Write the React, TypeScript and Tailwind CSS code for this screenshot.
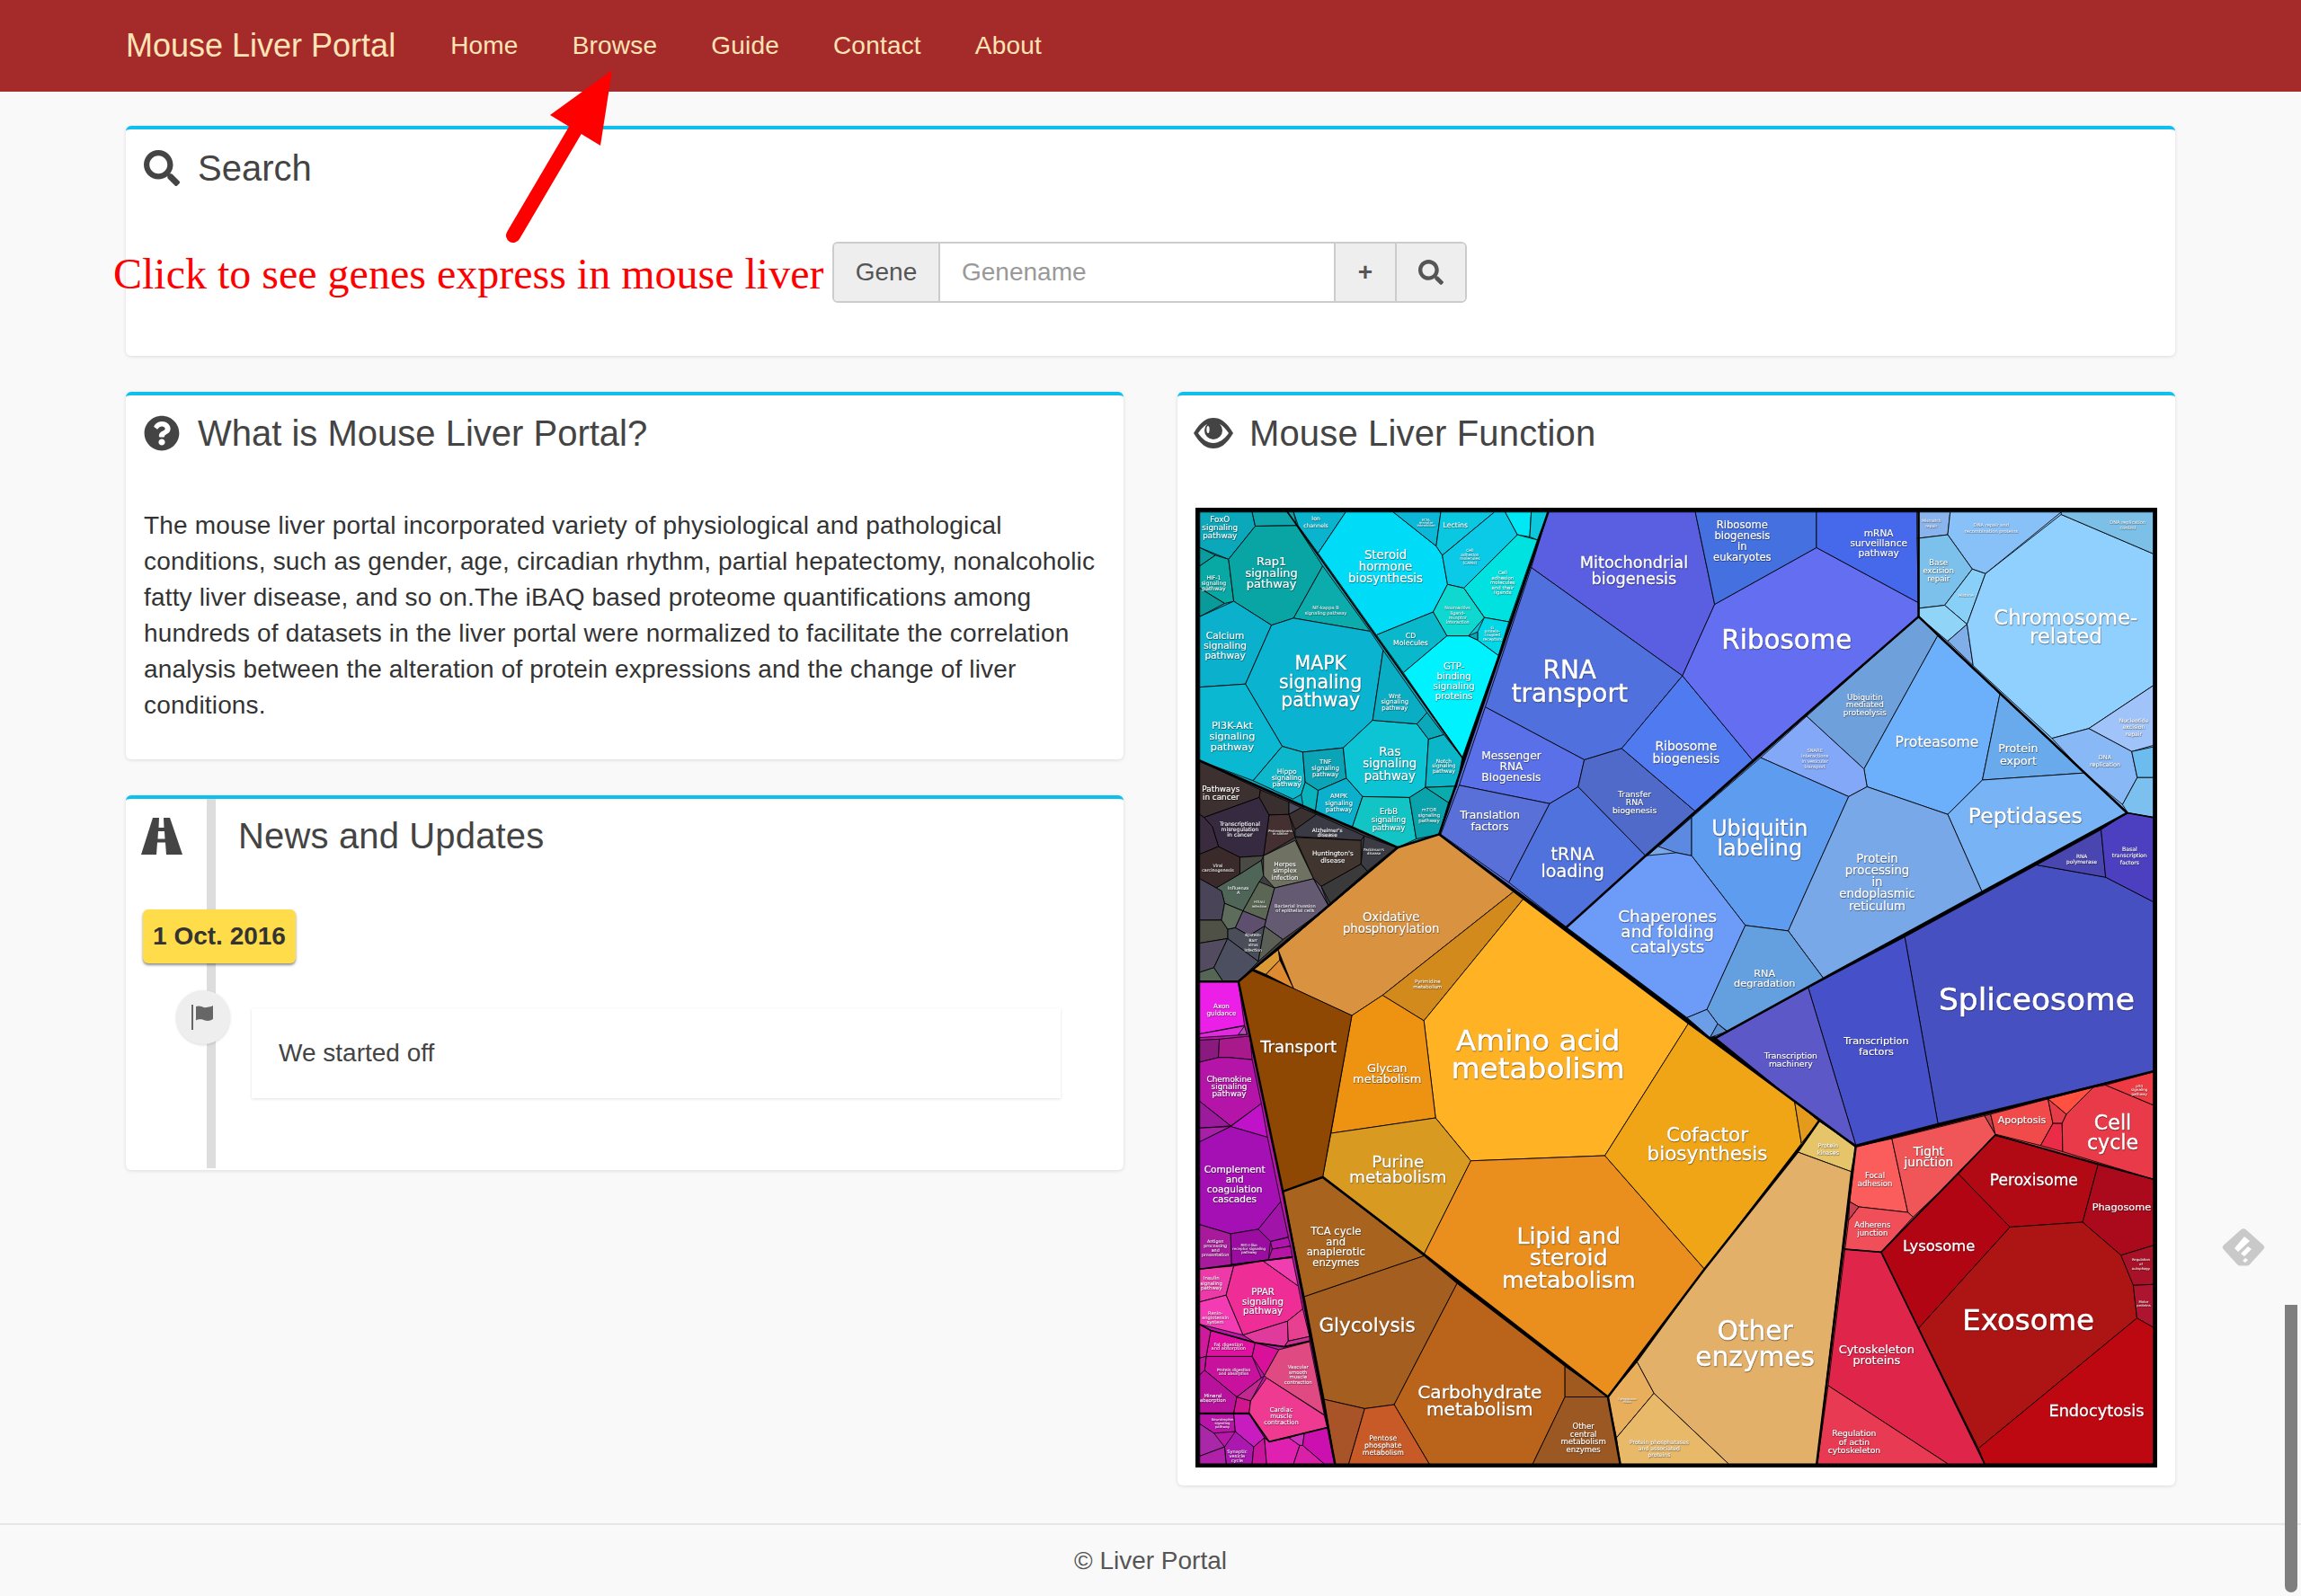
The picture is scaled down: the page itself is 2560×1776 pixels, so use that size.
import { FaQuestionCircle, FaSearch } from 'react-icons/fa';

type Cell = [string, string];
type Label = [number, number, number, number, string];

// Treemap polygons, in units of the 3136 wide viewBox. q1 also holds cells that span quadrants.
const backing: Cell[] = [
  ['#0aa9bf', '14,14 300,14 870,815 795,1065 660,1108 14,825'],
  ['#0ac5dc', '300,14 1150,14 870,815'],
  ['#3f3d40', '14,825 660,1108 140,1545 14,1545'],
  ['#b818a8', '14,1545 140,1545 285,2230 455,3118 14,3118'],
  ['#5870d8', '1150,14 2358,14 2358,355 1210,1368 795,1065'],
  ['#88c0f8', '2358,14 3123,14 3123,1010 3038,995 2358,355'],
  ['#78a8e8', '2358,355 3038,995 2048,1535 1698,1728 1210,1368'],
  ['#e8414c', '2153,2083 3123,1838 3123,3118 2026,3118'],
];

const q1: Cell[] = [
  ['#0aa8ba', '14,14 185,14 195,60 108,168 14,130'],
  ['#0ea5ad', '185,14 320,14 330,58 195,60'],
  ['#0a9c9e', '14,130 65,155 14,190'],
  ['#08a8a5', '14,190 65,155 108,168 125,305 95,312 14,262'],
  ['#0a9a9a', '14,262 95,312 14,355'],
  ['#09a5a5', '108,168 195,60 330,58 415,190 320,360 248,383 125,305'],
  ['#0cacac', '415,190 570,403 320,360'],
  ['#0ab0cc', '14,355 125,305 248,383 163,575 14,585'],
  ['#0ab3cf', '248,383 320,360 570,403 612,465 578,693 482,783 350,797 283,778 163,575'],
  ['#0ab8d2', '14,585 163,575 283,778 188,890 14,825'],
  ['#0db8cc', '283,778 350,797 358,895 345,935 318,950 188,890'],
  ['#0aa4b6', '350,797 482,783 492,882 400,922 358,895'],
  ['#0cc4d4', '482,783 578,693 722,705 760,755 750,912 698,945 545,942 492,882'],
  ['#0aa8b8', '722,705 755,668 810,740 760,755'],
  ['#0aaec4', '612,465 755,668 722,705 578,693'],
  ['#0ab6c8', '760,755 810,740 870,815 852,908 750,912'],
  ['#0aabab', '750,912 852,908 825,962'],
  ['#0ab0cc', '400,922 492,882 545,942 512,1040 390,995'],
  ['#0ab4bc', '345,935 358,895 400,922 390,995 352,980'],
  ['#12c4c4', '545,942 698,945 720,1080 660,1108 512,1040'],
  ['#0aa3ac', '698,945 750,912 825,962 795,1065 720,1080'],
  ['#0bb4ce', '320,14 490,14 400,148 335,58'],
  ['#00dcf8', '490,14 645,14 785,125 805,155 822,250 775,340 590,415 400,148'],
  ['#0bb8d8', '645,14 800,14 785,125'],
  ['#0ac8e0', '800,14 975,14 805,155 785,125'],
  ['#0acae8', '975,14 1010,14 1050,88 875,262 822,250 805,155'],
  ['#00e8f5', '1010,14 1095,14 1090,95 1050,88'],
  ['#0cc8dc', '1095,14 1150,14 1115,105 1090,95'],
  ['#00e2e0', '1050,88 1115,105 1022,372 942,358 875,262'],
  ['#0fd8d0', '822,250 875,262 942,358 890,418 820,418 775,340'],
  ['#0ab8cc', '775,340 820,418 678,538 590,415'],
  ['#00d8e8', '942,358 1022,372 988,482 920,432 920,405'],
  ['#0aa8b8', '890,418 920,405 920,432'],
  ['#00f2ff', '820,418 890,418 920,432 988,482 870,815 678,538'],
  // dark group
  ['#3d3030', '14,825 212,920 208,945 28,1010 14,1000'],
  ['#3a2f2f', '212,920 305,960 305,1000 240,1002 208,945'],
  ['#4a4a5a', '305,960 345,978 305,1000'],
  ['#443030', '240,1002 305,1000 325,1075 222,1135'],
  ['#3a3030', '345,978 395,1000 325,1050 305,1000'],
  ['#352a40', '28,1010 208,945 240,1002 222,1135 145,1140 75,1105 55,1040'],
  ['#3a2c3e', '14,1000 28,1010 55,1040 75,1105 14,1130'],
  ['#3a2a2a', '14,1130 75,1105 145,1140 145,1195 68,1240 14,1210'],
  ['#4a4a45', '145,1140 222,1135 215,1150 145,1195'],
  ['#3a3a44', '395,1000 550,1070 540,1085 325,1072 325,1050'],
  ['#40352f', '325,1075 540,1085 540,1162 410,1235 385,1210'],
  ['#3b3b44', '550,1070 655,1108 560,1185 540,1162'],
  ['#3a3a3a', '410,1235 540,1162 560,1185 440,1290'],
  ['#6f7163', '325,1085 385,1210 258,1240 222,1200 222,1135'],
  ['#4f6558', '145,1195 215,1150 222,1200 208,1220 155,1315 95,1290 85,1250 68,1240'],
  ['#5b6654', '208,1220 258,1240 230,1345 155,1315'],
  ['#645a72', '258,1240 385,1210 435,1300 285,1408 225,1365 230,1345'],
  ['#5e5870', '385,1210 410,1235 435,1300'],
  ['#4a4458', '14,1210 68,1240 85,1250 95,1290 85,1345 14,1345'],
  ['#5e6d5b', '95,1290 155,1315 130,1370 105,1375 85,1345'],
  ['#5e4f6e', '155,1315 230,1345 225,1365 175,1395 130,1370'],
  ['#4a4e58', '130,1370 175,1395 225,1365 205,1480 105,1405 105,1375'],
  ['#5c5f56', '225,1365 285,1408 205,1480'],
  ['#4f5046', '14,1345 85,1345 105,1375 105,1405 14,1420'],
  ['#534c60', '14,1420 105,1405 60,1500 14,1515'],
  ['#4b4f60', '105,1405 205,1480 140,1545 90,1545 60,1500'],
  ['#556656', '14,1515 60,1500 90,1545 14,1545'],
  // orange and brown
  ['#d9923f', '660,1108 795,1065 1040,1250 610,1590 510,1656 320,1568 270,1442'],
  ['#db9a33', '270,1442 190,1505 230,1522 275,1475'],
  ['#df8a30', '275,1475 230,1522 320,1568'],
  ['#d28a1c', '1040,1250 1070,1275 745,1673 610,1590'],
  ['#ffb324', '1070,1275 1608,1681 1335,2113 898,2130 783,1990 745,1673'],
  ['#ee9212', '510,1656 610,1590 745,1673 783,1990 442,2040'],
  ['#d89a20', '442,2040 783,1990 898,2130 745,2435 415,2183'],
  ['#ea8f1e', '898,2130 1335,2113 1660,2483 1345,2900 745,2435'],
  ['#f0a517', '1608,1681 1953,1933 1976,2073 1660,2483 1335,2113'],
  ['#e49a1c', '1953,1933 2033,2000 1976,2073'],
  ['#e6c56a', '2033,2000 2153,2083 2138,2165 1963,2101 1976,2073'],
  ['#e2b068', '1963,2101 2138,2165 2026,3118 1738,3118 1495,2888 1440,2786 1660,2483'],
  ['#e8ae5c', '1345,2900 1440,2786 1495,2888 1373,3033'],
  ['#e8b968', '1373,3033 1495,2888 1738,3118 1385,3118'],
  ['#8f4704', '140,1545 185,1510 320,1568 510,1656 415,2183 285,2230'],
  ['#a8641f', '285,2230 415,2185 745,2440 355,2573'],
  ['#a45f20', '355,2573 745,2440 853,2530 648,2925 552,2938 420,2908'],
  ['#b9641a', '853,2530 1205,2800 1205,2900 1100,3118 762,3118 648,2925'],
  ['#a05a20', '1205,2800 1345,2900 1205,2900'],
  ['#9c5822', '1205,2900 1345,2900 1385,3118 1100,3118'],
  ['#a85428', '420,2908 552,2938 500,3118 455,3118'],
  ['#c85a28', '552,2938 648,2925 762,3118 500,3118'],
  // blue cells around the two upper quadrants
  ['#5a5ee0', '1150,14 1630,14 1693,315 1588,548 1095,195'],
  ['#5070de', '1095,195 1588,548 1390,785 1268,822 945,650'],
  ['#5a70e8', '945,650 1268,822 1248,910 1155,965 860,905'],
  ['#5870d8', '860,905 1155,965 1022,1222 800,1065'],
  ['#4f72dc', '1155,965 1248,910 1468,1135 1210,1368 1022,1222'],
  ['#4f6ac8', '1268,822 1390,785 1630,990 1618,1010 1468,1135 1248,910'],
  ['#5b8ae0', '1510,1105 1618,1010 1618,1135 1568,1125'],
  ['#4f7af0', '1588,548 1818,825 1630,990 1390,785'],
  ['#636ff0', '1693,315 2025,130 2358,310 2358,355 1818,825 1588,548'],
];

const q2: Cell[] = [
  ['#4470e0', '62,14 457,14 457,130 125,315'],
  ['#4668ea', '457,14 785,14 790,310 457,130'],
  ['#8ab4ee', '785,14 893,14 885,88 785,100'],
  ['#88c0f8', '893,14 1255,14 1008,215 965,200 885,88'],
  ['#7cc0ec', '785,100 885,88 965,200 875,318 790,328'],
  ['#88d0f8', '965,200 1008,215 948,380 875,318'],
  ['#90d4f8', '790,328 875,318 948,380 885,435 790,355'],
  ['#80aee8', '948,380 968,515 885,435'],
  ['#90d0ff', '1008,215 1255,22 1555,150 1555,580 1345,720 1225,752 968,515 948,380'],
  ['#7cc0e8', '1255,14 1555,14 1555,150 1255,22'],
  ['#a0c4fa', '1555,580 1555,775 1485,795 1345,720'],
  ['#88b8f5', '1225,752 1345,720 1485,795 1503,880 1455,968 1330,865'],
  ['#6cbcf0', '1485,795 1555,780 1555,880 1503,880'],
  ['#7cc0f0', '1503,880 1555,880 1555,1010 1472,995 1455,968'],
  ['#6ea0dc', '790,355 852,418 612,852 425,680'],
  ['#6cb0fc', '852,418 1055,608 998,888 885,1000 622,910 612,852'],
  ['#68aaeb', '1055,608 1330,865 998,888'],
  ['#78b4f5', '998,888 1330,865 1470,995 998,1255 885,1000'],
  ['#84a8f8', '425,680 612,852 622,910 562,942 275,815'],
  ['#5e9cf0', '275,815 562,942 365,1380 225,1362 50,1135 50,1010'],
  ['#78a8e8', '562,942 622,910 885,1000 998,1255 480,1535 365,1380'],
  ['#6c9cf8', '50,1135 225,1362 100,1636 35,1663 -358,1368 -100,1135 0,1125'],
  ['#64a0e0', '225,1362 365,1380 480,1535 168,1708 135,1683 100,1636'],
  ['#6c9ee8', '35,1663 100,1636 135,1683 110,1728'],
  ['#5a8ed0', '135,1683 165,1708 110,1728'],
  ['#4650c0', '1175,1165 1400,1205 1555,1285 1555,1838 853,2008 745,1400'],
  ['#4a46b0', '1385,1050 1400,1205 1175,1165'],
  ['#4c40c0', '1385,1050 1470,995 1555,1010 1555,1285 1400,1205'],
  ['#4650c8', '745,1400 853,2008 585,2078 430,1565'],
  ['#5c58c8', '430,1565 585,2078 465,2000 130,1730'],
];

const q3: Cell[] = [
  ['#ec1fe8', '14,-23 140,-23 160,120 14,148'],
  ['#e02ae0', '14,148 160,122 168,150 14,160'],
  ['#b050b0', '140,150 160,122 168,150'],
  ['#8a1a80', '14,168 78,165 75,225 14,240'],
  ['#a81a8c', '78,165 178,155 185,232 110,225 75,225'],
  ['#b414a8', '14,240 75,225 110,225 185,232 215,375 115,448 14,368'],
  ['#c012c8', '215,375 235,485 115,450'],
  ['#9c1a9c', '14,368 115,448 14,455'],
  ['#a820a8', '14,455 115,450 14,500'],
  ['#a410b4', '14,500 115,450 235,485 278,695 205,785 115,800 14,770'],
  ['#a015a8', '278,695 303,810 245,825 205,785'],
  ['#a81a9c', '14,770 115,800 118,905 14,915'],
  ['#9a0da0', '115,800 205,785 245,825 238,885 118,900'],
  ['#b015b0', '245,825 303,812 310,840 250,850'],
  ['#b515a5', '250,850 310,840 316,875 238,885'],
  ['#ee3aa8', '14,915 125,905 100,1000 14,1022'],
  ['#ee2d96', '125,905 220,888 335,970 350,1045 300,1085 155,1130 100,1000'],
  ['#f03db0', '220,888 316,878 335,970'],
  ['#f53bb4', '14,1022 100,1000 155,1130 14,1095'],
  ['#e84090', '300,1085 350,1045 372,1135 302,1150'],
  ['#e03a9c', '155,1130 300,1085 302,1150 290,1168 195,1155'],
  ['#cc3090', '302,1150 372,1135 372,1150 290,1168'],
  ['#e010a0', '50,1115 195,1155 185,1200 35,1200'],
  ['#cf1a9c', '14,1095 50,1115 35,1200 14,1205'],
  ['#d8109a', '195,1155 272,1178 225,1262 185,1200'],
  ['#c8129e', '35,1200 185,1200 215,1270 135,1332 30,1245'],
  ['#c0189c', '14,1205 35,1200 30,1245 14,1260'],
  ['#b8129c', '14,1260 30,1245 135,1332 125,1385 14,1385'],
  ['#d0158e', '135,1332 180,1345 175,1385 125,1385'],
  ['#c02a90', '215,1270 225,1262 180,1345 135,1332'],
  ['#df4a82', '272,1178 372,1152 420,1390 232,1270 225,1262'],
  ['#ee3a90', '232,1270 420,1392 430,1432 240,1478 175,1385 180,1345'],
  ['#b815a8', '14,1388 125,1388 130,1445 60,1450 14,1420'],
  ['#c81cc0', '125,1388 175,1388 225,1465 190,1495 130,1445'],
  ['#a828a8', '14,1420 60,1450 95,1495 14,1525'],
  ['#aa18b0', '95,1495 130,1445 190,1495 185,1550 100,1550'],
  ['#b020a8', '14,1525 95,1495 100,1550 14,1550'],
  ['#c8159c', '190,1495 225,1465 232,1550 185,1550'],
  ['#e020b0', '225,1465 240,1478 305,1465 340,1490 320,1550 232,1550'],
  ['#d030c0', '305,1465 355,1450 350,1490 340,1490'],
  ['#d820a8', '340,1490 350,1490 420,1550 320,1550'],
  ['#cc10b0', '355,1450 430,1432 453,1550 420,1550 350,1490'],
];

const q4: Cell[] = [
  ['#fb5c5c', '585,515 703,490 755,730 595,712 565,695'],
  ['#f05558', '703,490 1005,415 1040,475 920,605 772,745 755,730'],
  ['#c04048', '1005,415 1025,410 1040,475'],
  ['#f04a4a', '1025,410 1212,360 1228,440 1188,512 1040,475'],
  ['#e43c48', '1212,360 1272,410 1258,440 1228,440'],
  ['#ff5040', '1212,360 1360,322 1272,410'],
  ['#ea2c48', '1228,440 1258,440 1260,532 1188,512'],
  ['#e83a48', '1258,440 1272,410 1360,322 1400,315 1555,380 1555,622 1260,532'],
  ['#ee3a42', '1400,315 1555,272 1555,380'],
  ['#f04e58', '595,712 755,730 772,745 668,860 550,850 562,755'],
  ['#c84050', '565,695 595,712 562,755'],
  ['#b20a14', '1040,478 1375,575 1325,762 1088,778 920,605'],
  ['#b10514', '920,605 1088,778 790,1108 668,860'],
  ['#aa0a1c', '1375,575 1555,622 1555,838 1450,870 1325,762'],
  ['#ad1515', '1088,778 1325,762 1450,870 1490,965 1502,1075 985,1500 790,1108'],
  ['#a81228', '1450,870 1555,838 1555,965 1490,968'],
  ['#ac1430', '1490,968 1555,965 1555,1105 1502,1075'],
  ['#bd0812', '1502,1075 1555,1105 1555,1550 1005,1550 985,1500'],
  ['#e0254a', '550,850 668,860 790,1108 985,1500 1005,1550 885,1550 495,1295'],
  ['#e83a52', '495,1295 885,1550 460,1550'],
];

// Heavy lines between the groups, all in the full viewBox
const heavy = [
  '1150,14 795,1065',
  '14,825 660,1108 795,1065',
  '660,1108 140,1545 14,1545',
  '795,1065 1070,1275 1608,1681 2153,2083',
  '140,1545 285,2230 455,3118',
  '285,2230 415,2183 745,2435 1345,2900 1660,2483 1963,2101 2033,2000',
  '1345,2900 1385,3118',
  '2153,2083 2026,3118',
  '2153,2083 3123,1838',
  '1210,1368 1468,1135 1818,825 2358,355 3038,995 2048,1535 1698,1728',
  '2358,14 2358,355',
];

// Second tier lines inside a group
const medium = [
  '300,14 870,815',
  '3038,995 3123,1010',
  '2608,2046 3123,2190',
  '2608,2046 2236,2428 2573,3118',
  '2118,2418 2236,2428',
  '14,2483 316,2443',
  '14,2663 50,2683 195,2723 290,2736 372,2718',
  '14,2953 175,2953 240,3046 430,3000',
];

// x, first line centre y, font size, line step, text (lines split by |)
const labels1: Label[] = [
  [80, 38, 26, 26, 'FoxO|signaling|pathway'],
  [248, 174, 38, 37, 'Rap1|signaling|pathway'],
  [60, 226, 18, 18, 'HIF-1|signaling|pathway'],
  [425, 326, 15, 16, 'NF-kappa B|signaling pathway'],
  [97, 416, 31, 32, 'Calcium|signaling|pathway'],
  [408, 508, 60, 60, 'MAPK|signaling|pathway'],
  [120, 712, 33, 34, 'PI3K-Akt|signaling|pathway'],
  [620, 155, 39, 38, 'Steroid|hormone|biosynthesis'],
  [393, 35, 18, 21, 'Ion|channels'],
  [848, 58, 23, 20, 'Lectins'],
  [752, 42, 11, 9, 'ECM-|receptor|interaction'],
  [298, 860, 22, 20, 'Hippo|signaling|pathway'],
  [424, 830, 20, 20, 'TNF|signaling|pathway'],
  [634, 796, 39, 39, 'Ras|signaling|pathway'],
  [650, 614, 20, 20, 'Wnt|signaling|pathway'],
  [810, 825, 17, 17, 'Notch|signaling|pathway'],
  [468, 942, 20, 21, 'AMPK|signaling|pathway'],
  [630, 990, 25, 26, 'ErbB|signaling|pathway'],
  [762, 985, 16, 17, 'mTOR|signaling|pathway'],
  [702, 419, 23, 22, 'CD|Molecules'],
  [843, 518, 30, 32, 'GTP-|binding|signaling|proteins'],
  [895, 140, 13, 13, 'Cell|adhesion|molecules|(CAMs)'],
  [1002, 212, 16, 16, 'Cell|adhesion|molecules|and their|ligands'],
  [855, 327, 14, 16, 'Neuroactive|ligand-|receptor|interaction'],
  [968, 392, 13, 12, 'G|protein-|coupled|receptors'],
  [83, 916, 26, 27, 'Pathways|in cancer'],
  [145, 1030, 18, 18, 'Transcriptional|misregulation|in cancer'],
  [277, 1054, 11, 10, 'Proteoglycans|in cancer'],
  [430, 1052, 17, 16, "Alzheimer's|disease"],
  [448, 1128, 21, 22, "Huntington's|disease"],
  [582, 1114, 12, 12, "Parkinson's|disease"],
  [73, 1168, 14, 16, 'Viral|carcinogenesis'],
  [292, 1163, 20, 22, 'Herpes|simplex|infection'],
  [140, 1240, 15, 13, 'Influenza|A'],
  [208, 1288, 11, 12, 'HTLV-I|infection'],
  [325, 1298, 15, 15, 'Bacterial invasion|of epithelial cells'],
  [188, 1395, 13, 16, 'Epstein-|Barr|virus|infection'],
  [638, 1335, 39, 38, 'Oxidative|phosphorylation'],
  [960, 1003, 36, 38, 'Translation|factors'],
  [1030, 808, 36, 36, 'Messenger|RNA|Biogenesis'],
  [1220, 530, 82, 76, 'RNA|transport'],
  [1430, 180, 52, 52, 'Mitochondrial|biogenesis'],
  [1230, 1130, 56, 55, 'tRNA|loading'],
  [1432, 932, 27, 27, 'Transfer|RNA|biogenesis'],
  [1539, 1333, 54, 50, 'Chaperones|and folding|catalysts'],
  [1600, 778, 41, 41, 'Ribosome|biogenesis'],
  [757, 1545, 16, 17, 'Pyrimidine|metabolism'],
];

const labels2: Label[] = [
  [215, 57, 34, 35, 'Ribosome|biogenesis|in|eukaryotes'],
  [660, 82, 31, 32, 'mRNA|surveillance|pathway'],
  [360, 430, 86, 78, 'Ribosome'],
  [832, 43, 13, 16, 'Mismatch|repair'],
  [1027, 56, 15, 20, 'DNA repair and|recombination proteins'],
  [855, 180, 25, 26, 'Base|excision|repair'],
  [945, 287, 13, 12, 'Histone'],
  [1270, 358, 67, 62, 'Chromosome-|related'],
  [1472, 46, 15, 18, 'DNA replication|control'],
  [615, 617, 26, 25, 'Ubiquitin|mediated|proteolysis'],
  [850, 763, 46, 44, 'Proteasome'],
  [1115, 785, 37, 40, 'Protein|export'],
  [1138, 1005, 69, 62, 'Peptidases'],
  [452, 790, 15, 18, 'SNARE|interactions|in vesicular|transport'],
  [272, 1047, 70, 64, 'Ubiquitin|labeling'],
  [655, 1143, 39, 39, 'Protein|processing|in|endoplasmic|reticulum'],
  [1492, 692, 18, 22, 'Nucleotide|excision|repair'],
  [1398, 815, 19, 22, 'DNA|replication'],
  [1322, 1136, 17, 20, 'RNA|polymerase'],
  [1478, 1113, 18, 21, 'Basal|transcription|factors'],
  [288, 1520, 33, 33, 'RNA|degradation'],
];

const labels3: Label[] = [
  [85, 57, 21, 23, 'Axon|guidance'],
  [336, 188, 53, 44, 'Transport'],
  [625, 258, 38, 36, 'Glycan|metabolism'],
  [1117, 170, 96, 92, 'Amino acid|metabolism'],
  [660, 563, 54, 52, 'Purine|metabolism'],
  [110, 295, 26, 24, 'Chemokine|signaling|pathway'],
  [128, 590, 31, 32, 'Complement|and|coagulation|cascades'],
  [458, 792, 34, 34, 'TCA cycle|and|anaplerotic|enzymes'],
  [1217, 807, 74, 72, 'Lipid and|steroid|metabolism'],
  [560, 1098, 63, 58, 'Glycolysis'],
  [927, 1317, 59, 56, 'Carbohydrate|metabolism'],
  [220, 990, 30, 30, 'PPAR|signaling|pathway'],
  [335, 1235, 16, 16, 'Vascular|smooth|muscle|contraction'],
  [280, 1375, 20, 21, 'Cardiac|muscle|contraction'],
  [108, 1160, 15, 13, 'Fat digestion|and absorption'],
  [125, 1243, 13, 13, 'Protein digestion|and absorption'],
  [57, 1328, 16, 14, 'Mineral|absorption'],
  [65, 1058, 15, 15, 'Renin-|angiotensin|system'],
  [52, 945, 16, 15, 'Insulin|signaling|pathway'],
  [65, 825, 14, 15, 'Antigen|processing|and|presentation'],
  [175, 837, 12, 12, 'RIG-I-like|receptor signaling|pathway'],
  [612, 1467, 23, 23, 'Pentose|phosphate|metabolism'],
  [1265, 1428, 25, 25, 'Other|central|metabolism|enzymes'],
  [136, 1508, 15, 15, 'Synaptic|vesicle|cycle'],
  [88, 1408, 11, 11, 'Neurotrophin|signaling|pathway'],
  [1408, 1338, 10, 11, 'Cytoplasmic|RNAs'],
  [1512, 1480, 18, 20, 'Protein phosphatases|and associated|proteins'],
];

const labels4: Label[] = [
  [1175, 35, 101, 78, 'Spliceosome'],
  [652, 170, 33, 36, 'Transcription|factors'],
  [373, 217, 27, 28, 'Transcription|machinery'],
  [101, 475, 63, 63, 'Cofactor|biosynthesis'],
  [495, 512, 19, 23, 'Protein|kinases'],
  [648, 609, 25, 26, 'Focal|adhesion'],
  [823, 529, 40, 38, 'Tight|junction'],
  [1127, 429, 32, 29, 'Apoptosis'],
  [1423, 438, 65, 64, 'Cell|cycle'],
  [1166, 625, 50, 46, 'Peroxisome'],
  [1452, 715, 33, 28, 'Phagosome'],
  [640, 771, 25, 25, 'Adherens|junction'],
  [856, 840, 48, 42, 'Lysosome'],
  [1148, 1082, 95, 80, 'Exosome'],
  [257, 1115, 87, 85, 'Other|enzymes'],
  [653, 1177, 38, 36, 'Cytoskeleton|proteins'],
  [1370, 1378, 52, 44, 'Endocytosis'],
  [580, 1450, 27, 28, 'Regulation|of actin|cytoskeleton'],
  [1510, 318, 12, 13, 'p53|signaling|pathway'],
  [1515, 885, 11, 14, 'Regulation|of|autophagy'],
  [1524, 1022, 11, 14, 'Motor|proteins'],
];

function Cells({ cells }: { cells: Cell[] }) {
  return (
    <>
      {cells.map(([fill, points], i) => (
        <polygon key={i} points={points} fill={fill} stroke="#000" strokeWidth={2.5} strokeLinejoin="round" />
      ))}
    </>
  );
}

function Labels({ items }: { items: Label[] }) {
  return (
    <g className="drop-shadow-[1.5px_2.5px_2px_rgba(0,0,0,0.6)]">
      {items.map(([x, y, size, step, text]) =>
        text.split('|').map((line, i) => (
          <text
            key={text + i}
            x={x}
            y={y + i * step}
            fontSize={size}
            fontFamily="DejaVu Sans, sans-serif"
            fill="#fff"
            fillOpacity={size < 17 ? 0.85 : 1}
            stroke="#fff"
            strokeWidth={size * 0.018}
            textAnchor="middle"
            dominantBaseline="central"
          >
            {line}
          </text>
        ))
      )}
    </g>
  );
}

function Lines({ lines, width }: { lines: string[]; width: number }) {
  return (
    <>
      {lines.map((points) => (
        <polyline
          key={points}
          points={points}
          fill="none"
          stroke="#000"
          strokeWidth={width}
          strokeLinejoin="round"
          strokeLinecap="round"
        />
      ))}
    </>
  );
}

function Treemap() {
  return (
    <svg viewBox="0 0 3136 3130" className="block h-[1068px] w-[1070px]">
      <rect width="3136" height="3130" fill="#000" />
      <Cells cells={backing} />
      <Cells cells={q1} />
      <g transform="translate(1568 0)">
        <Cells cells={q2} />
      </g>
      <g transform="translate(0 1568)">
        <Cells cells={q3} />
      </g>
      <g transform="translate(1568 1568)">
        <Cells cells={q4} />
      </g>
      <Lines lines={medium} width={5} />
      <Lines lines={heavy} width={7.5} />
      <Labels items={labels1} />
      <g transform="translate(1568 0)">
        <Labels items={labels2} />
      </g>
      <g transform="translate(0 1568)">
        <Labels items={labels3} />
      </g>
      <g transform="translate(1568 1568)">
        <Labels items={labels4} />
      </g>
    </svg>
  );
}

const navLinks = ['Home', 'Browse', 'Guide', 'Contact', 'About'];

function Card({ className, children }: { className: string; children: React.ReactNode }) {
  return (
    <div className={`rounded-[6px] border-t-4 border-[#0fc0ee] bg-white shadow-[0_1px_4px_rgba(0,0,0,0.12)] ${className}`}>
      {children}
    </div>
  );
}

export default function App() {
  return (
    <div className="relative h-[1776px] overflow-hidden bg-[#f9f9f9] font-['Liberation_Sans',Arial,sans-serif] text-[#444]">
      {/* Navbar */}
      <nav className="flex h-[102px] items-center bg-[#a52a2a] pl-[140px] text-[#ffe4b5]">
        <span className="mr-[31px] text-[36px]">Mouse Liver Portal</span>
        {navLinks.map((link) => (
          <a key={link} className="px-[30px] text-[28px] tracking-[0.2px]">
            {link}
          </a>
        ))}
      </nav>

      <main className="px-[140px] pt-[38px]">
        {/* Search */}
        <Card className="h-[256px] px-[20px] pt-[13px]">
          <div className="flex h-[60px] items-center gap-[20px] text-[40px]">
            <FaSearch className="h-[40px] w-[40px]" />
            <span>Search</span>
          </div>
          <div className="ml-[-34px] mt-[47px] flex items-center">
            <span className="w-[800px] whitespace-nowrap pt-[5px] font-['Liberation_Serif',serif] text-[48px] text-[#f00]">
              Click to see genes express in mouse liver
            </span>
            <div className="flex h-[68px] w-[706px] overflow-hidden rounded-[6px] border-2 border-[#ccc] text-[28px] text-[#555]">
              <span className="flex w-[118px] items-center justify-center border-r-2 border-[#ccc] bg-[#eee]">Gene</span>
              <span className="flex w-[438px] items-center bg-white pl-[24px] text-[#999]">Genename</span>
              <span className="flex w-[70px] items-center justify-center border-x-2 border-[#ccc] bg-[#eee] font-bold">+</span>
              <span className="flex flex-1 items-center justify-center bg-[#eee]">
                <FaSearch className="h-[28px] w-[28px]" />
              </span>
            </div>
          </div>
        </Card>

        <div className="mt-[40px] flex gap-[60px]">
          <div className="flex w-[1110px] flex-col gap-[40px]">
            {/* About */}
            <Card className="h-[409px] px-[20px] pt-[12px]">
              <div className="flex h-[60px] items-center gap-[20px] text-[40px]">
                <FaQuestionCircle className="h-[40px] w-[40px]" />
                <span>What is Mouse Liver Portal?</span>
              </div>
              <p className="mt-[53px] text-[28px] leading-[40px] tracking-[0.17px] text-[#333]">
                The mouse liver portal incorporated variety of physiological and pathological conditions, such as
                gender, age, circadian rhythm, partial hepatectomy, nonalcoholic fatty liver disease, and so on.The
                iBAQ based proteome quantifications among hundreds of datasets in the liver portal were normalized to
                facilitate the correlation analysis between the alteration of protein expressions and the change of
                liver conditions.
              </p>
            </Card>

            {/* News timeline */}
            <Card className="relative h-[417px] pl-[17px] pt-[11px]">
              <div className="absolute bottom-[2px] left-[90px] top-0 w-[10px] bg-[#ddd]" />
              <div className="relative flex h-[60px] items-center text-[40px]">
                <svg viewBox="0 0 46 41" className="h-[41px] w-[46px]">
                  <path
                    fillRule="evenodd"
                    fill="#444"
                    d="M13 0H20L19.500 11H25.500L25 0H32L46 41H28L27 27.500H18L17 41H0ZM19 15L18.500 23.500H26.500L26 15Z"
                  />
                </svg>
                <span className="ml-[62px] tracking-[0.15px]">News and Updates</span>
              </div>
              <div className="relative ml-[2px] mt-[52px] flex h-[60px] w-[170px] items-center justify-center rounded-[6px] bg-[#ffdd4a] text-[28px] font-bold text-[#333] shadow-[0_2px_3px_rgba(0,0,0,0.45)]">
                1 Oct. 2016
              </div>
              <div className="relative mt-[30px] flex items-start">
                <div className="ml-[39px] flex h-[60px] w-[60px] items-center justify-center rounded-full bg-[#eee] shadow-[0_1px_3px_rgba(0,0,0,0.15)]">
                  <svg viewBox="0 0 28 28" className="h-[28px] w-[28px]">
                    <rect x="1" y="0" width="2" height="28" fill="#666" />
                    <path d="M6 2c5-2 8 2 12 1 3-.5 5-1 7-2v15c-3 2-6 2.500-9 1.500s-6-2-10 0z" fill="#666" />
                  </svg>
                </div>
                <div className="ml-[24px] mt-[20px] flex h-[100px] w-[900px] items-center bg-white pl-[30px] text-[28px] shadow-[0_1px_3px_rgba(0,0,0,0.12)]">
                  We started off
                </div>
              </div>
            </Card>
          </div>

          {/* Function map */}
          <Card className="w-[1110px] px-[20px] pb-[20px] pt-[12px]">
            <div className="flex h-[60px] items-center gap-[18px] text-[40px]">
              <svg viewBox="0 0 44 34" className="ml-[-2px] h-[34px] w-[44px]">
                <path fill="#444" d="M0 17C8 4 14 0 22 0C30 0 36 4 44 17C36 30 30 34 22 34C14 34 8 30 0 17Z" />
                <path fill="#fff" d="M5 17C9 11 13 8 15 7H29C33 9 36 13 39 17C34 24 28 28 22 28C15 28 10 24 5 17Z" />
                <circle cx="22" cy="14" r="10" fill="#444" />
                <ellipse cx="16" cy="13" rx="1.600" ry="4" fill="#fff" />
              </svg>
              <span className="tracking-[0.15px]">Mouse Liver Function</span>
            </div>
            <div className="mt-[53px]">
              <Treemap />
            </div>
          </Card>
        </div>
      </main>

      {/* Footer */}
      <footer className="absolute bottom-0 left-0 right-0 flex h-[81px] items-center justify-center border-t-2 border-[#e6e6e6] text-[28px] text-[#555]">
        © Liver Portal
      </footer>

      {/* Arrow pointing at Browse */}
      <svg viewBox="0 0 130 200" className="absolute left-[560px] top-[70px] h-[200px] w-[130px]">
        <polygon points="121,8 52,58 108,92" fill="#f00" />
        <line x1="84" y1="68" x2="11" y2="192" stroke="#f00" strokeWidth="16" strokeLinecap="round" />
      </svg>

      {/* Floating feedback badge */}
      <svg viewBox="0 0 48 42" className="absolute left-[2472px] top-[1367px] h-[42px] w-[48px]">
        <path
          d="M21 1.500a4 4 0 0 1 6 0l19 17a3.500 3.500 0 0 1 0 5l-15 16.500a4 4 0 0 1-3 1.500h-8a4 4 0 0 1-3-1.500L2 23.500a3.500 3.500 0 0 1 0-5z"
          fill="#c9c9c9"
        />
        <path d="M25 9l6 5-13 12-4-4zM29 20l4 3-8 8-4-3zM26 33l3 2-3 3-3-2z" fill="#fff" />
      </svg>

      {/* Scrollbar thumb */}
      <div className="absolute left-[2542px] top-[1452px] h-[320px] w-[14px] rounded-b-[7px] bg-[#7f7f7f]" />
    </div>
  );
}
